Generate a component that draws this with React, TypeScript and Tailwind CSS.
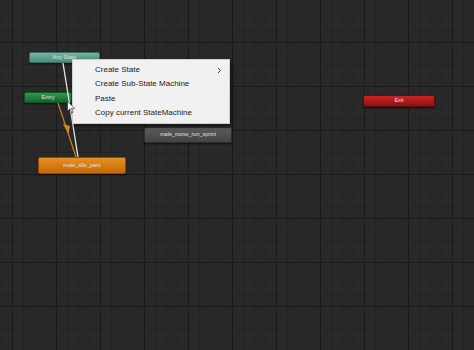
import React from 'react';

type Node = {
  label: string;
  x: number;
  y: number;
  w: number;
  h: number;
  cls: string;
};

const nodes: Node[] = [
  { label: 'Any State', x: 29, y: 52, w: 71, h: 11, cls: 'bg-gradient-to-b from-[#72b6a3] to-[#4b8c7a] border-[#3c6e60]' },
  { label: 'Entry', x: 24, y: 92, w: 48, h: 11, cls: 'bg-gradient-to-b from-[#2f9a4c] to-[#17662d] border-[#125224]' },
  { label: 'male_idle_pant', x: 38, y: 157, w: 88, h: 17, cls: 'bg-gradient-to-b from-[#e8901e] to-[#c56808] border-[#8f4c06]' },
  { label: 'male_move_run_sprint', x: 144, y: 127, w: 88, h: 16, cls: 'bg-gradient-to-b from-[#5a5a5a] to-[#444444] border-[#2e2e2e]' },
  { label: 'Exit', x: 363, y: 95, w: 72, h: 12, cls: 'bg-gradient-to-b from-[#c92424] to-[#8c1212] border-[#5e0c0c]' },
];

const menuItems = [
  { label: 'Create State', sub: true },
  { label: 'Create Sub-State Machine', sub: false },
  { label: 'Paste', sub: false },
  { label: 'Copy current StateMachine', sub: false },
];

const StateNode = ({ n }: { n: Node }) => (
  <div
    className={`absolute flex items-center justify-center rounded-[2px] border shadow-[0_1px_2px_rgba(0,0,0,0.6)] text-[5.5px] leading-none text-[#e2e2e2] font-['Liberation_Sans',sans-serif] ${n.cls}`}
    style={{ left: n.x, top: n.y, width: n.w, height: n.h }}
  >
    {n.label}
  </div>
);

export default function App() {
  return (
    <div className="relative w-[474px] h-[350px] overflow-hidden bg-[#292929] bg-[linear-gradient(to_right,#1b1b1b_1px,transparent_1px),linear-gradient(to_bottom,#1b1b1b_1px,transparent_1px),linear-gradient(to_right,#242424_1px,transparent_1px),linear-gradient(to_bottom,#242424_1px,transparent_1px)] bg-[size:44px_44px,44px_44px,11px_11px,11px_11px] bg-[position:12px_42px]">
      {nodes.map(n => (
        <StateNode key={n.label} n={n} />
      ))}

      {/* transitions */}
      <svg className="absolute left-0 top-0" width="474" height="350">
        <line x1="58" y1="103" x2="76" y2="157" stroke="#c8861a" strokeWidth="1.2" />
        <polygon points="63,124 70,126 68.5,134" fill="#d08a1a" />
        <line x1="63" y1="63" x2="78" y2="157" stroke="#e6e6e6" strokeWidth="1.3" />
      </svg>

      {/* context menu */}
      <div className="absolute left-[72px] top-[59px] w-[158px] py-[3px] bg-[#f1f1f1] border border-[#cfcfcf] shadow-[2px_2px_4px_rgba(0,0,0,0.55)] font-['Liberation_Sans',sans-serif] text-[8px] text-[#222222]">
        {menuItems.map(item => (
          <div key={item.label} className="flex items-center h-[14.3px] pl-[22px] pr-[7px]">
            <span className="flex-1">{item.label}</span>
            {item.sub && (
              <svg width="5" height="7" viewBox="0 0 5 7">
                <path d="M1 1 L3.5 3.5 L1 6" fill="none" stroke="#444" strokeWidth="1" />
              </svg>
            )}
          </div>
        ))}
      </div>

      {/* mouse cursor */}
      <svg className="absolute left-[67px] top-[101px]" width="9" height="13" viewBox="0 0 9 13">
        <path d="M0.5 0.5 L0.5 10 L3 7.8 L4.8 11.8 L6.2 11.2 L4.5 7.3 L7.8 7.3 Z" fill="#ffffff" stroke="#222" strokeWidth="0.6" />
      </svg>
    </div>
  );
}
